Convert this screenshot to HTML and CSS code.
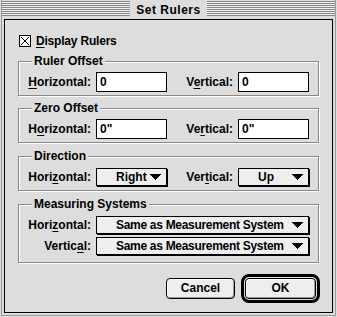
FILE: index.html
```html
<!DOCTYPE html>
<html>
<head>
<meta charset="utf-8">
<link rel="stylesheet" href="styles.css">
</head>
<body>
<div class="window">
  <div class="frame">
    <div class="titlebar"><span class="title">Set Rulers</span></div>
    <div class="panel">
      <div class="check-row">
        <span class="checkbox"><svg width="12" height="12" viewBox="0 0 12 12" shape-rendering="crispEdges"><rect x="0.5" y="0.5" width="11" height="11" fill="#fff" stroke="#000"/><path d="M2 2 L10 10 M10 2 L2 10" stroke="#000" stroke-width="1"/></svg></span>
        <span class="check-label"><u>D</u>isplay Rulers</span>
      </div>

      <div class="group g1">
        <div class="legend">Ruler Offset</div>
        <div class="row">
          <span class="lbl"><u>H</u>orizontal:</span><div class="field">0</div>
          <span class="lbl lbl-v">V<u>e</u>rtical:</span><div class="field">0</div>
        </div>
      </div>

      <div class="group g2">
        <div class="legend">Zero Offset</div>
        <div class="row">
          <span class="lbl">H<u>o</u>rizontal:</span><div class="field">0"</div>
          <span class="lbl lbl-v">Ve<u>r</u>tical:</span><div class="field">0"</div>
        </div>
      </div>

      <div class="group g3">
        <div class="legend">Direction</div>
        <div class="row row-pop">
          <span class="lbl">Hori<u>z</u>ontal:</span>
          <div class="popup pop-small"><span>Right</span><svg class="arrow" width="11" height="6" viewBox="0 0 11 6" shape-rendering="crispEdges"><polygon points="0,0 11,0 5.5,6" fill="#000"/></svg></div>
          <span class="lbl lbl-v">Ver<u>t</u>ical:</span>
          <div class="popup pop-small"><span>Up</span><svg class="arrow" width="11" height="6" viewBox="0 0 11 6" shape-rendering="crispEdges"><polygon points="0,0 11,0 5.5,6" fill="#000"/></svg></div>
        </div>
      </div>

      <div class="group g4">
        <div class="legend">Measuring Systems</div>
        <div class="row row-pop">
          <span class="lbl">Hori<u>z</u>ontal:</span>
          <div class="popup pop-wide"><span class="pop-text">Same as Measurement System</span><svg class="arrow" width="11" height="6" viewBox="0 0 11 6" shape-rendering="crispEdges"><polygon points="0,0 11,0 5.5,6" fill="#000"/></svg></div>
        </div>
        <div class="row row-pop row-second">
          <span class="lbl">Vertic<u>a</u>l:</span>
          <div class="popup pop-wide"><span class="pop-text">Same as Measurement System</span><svg class="arrow" width="11" height="6" viewBox="0 0 11 6" shape-rendering="crispEdges"><polygon points="0,0 11,0 5.5,6" fill="#000"/></svg></div>
        </div>
      </div>

      <div class="buttons">
        <div class="btn btn-cancel">Cancel</div>
        <div class="ring"><div class="btn btn-ok">OK</div></div>
      </div>
    </div>
  </div>
</div>
</body>
</html>
```

FILE: styles.css
```css
* { box-sizing: border-box; margin: 0; padding: 0; }
html, body { width: 337px; height: 317px; overflow: hidden; }
body {
  background: #dddddd;
  font: bold 12px/14px "Liberation Sans", Arial, sans-serif;
  color: #000;
}
u {
  text-decoration: underline;
  text-decoration-thickness: 1px;
  text-underline-offset: 2px;
}
.window {
  width: 337px;
  height: 317px;
  padding: 0 1px 1px 1px;
  background: #dddddd;
}
.frame {
  height: 100%;
  border: 1px solid #999999;
  border-top: 0;
  display: flex;
  flex-direction: column;
}
.titlebar {
  height: 19px;
  flex: none;
  display: flex;
  justify-content: center;
  align-items: center;
  background:
    repeating-linear-gradient(to bottom, #888888 0 1px, #eeeeee 1px 2px) 0 1px / 100% 15px no-repeat,
    #dddddd;
}
.title {
  background: #dddddd;
  padding: 1px 6px 0 6px;
  line-height: 18px;
  letter-spacing: 0.5px;
}
.panel {
  flex: 1;
  margin: 0 2px 2px 2px;
  border: 1px solid #000;
  background: #dddddd;
  display: flex;
  flex-direction: column;
  padding: 0 13px;
}
.check-row {
  margin-top: 15px;
  margin-left: 1px;
  height: 12px;
  display: flex;
  align-items: center;
  gap: 5px;
}
.checkbox { width: 12px; height: 12px; display: block; }
.checkbox svg { display: block; }
.check-label { letter-spacing: -0.2px; }

.group {
  border: 1px solid #888888;
  box-shadow: 1px 1px 0 #ffffff, inset 1px 1px 0 #ffffff;
  display: flex;
  flex-direction: column;
}
.legend {
  align-self: flex-start;
  margin: -8px 0 0 13px;
  padding: 0 2px;
  height: 14px;
  background: #dddddd;
}
.g1 { margin-top: 14px; padding-bottom: 3px; }
.g2 { margin-top: 12px; padding-bottom: 3px; }
.g3 { margin-top: 13px; padding-bottom: 4px; }
.g4 { margin-top: 13px; padding-bottom: 7px; }

.row {
  display: flex;
  align-items: center;
  margin-top: 4px;
}
.row-pop { margin-top: 5px; }
.row-second { margin-top: 3px; }
.lbl {
  width: 72px;
  text-align: right;
  margin-right: 5px;
  white-space: nowrap;
}
.lbl-v { width: 66px; }
.field {
  width: 71px;
  height: 20px;
  border: 1px solid #000;
  background: #fff;
  padding-left: 3px;
  line-height: 18px;
}
.popup {
  height: 18px;
  border: 1px solid #000;
  background: #eeeeee;
  box-shadow: 1px 1px 0 #000;
  display: flex;
  align-items: center;
  padding-left: 19px;
  padding-right: 5px;
  white-space: nowrap;
}
.pop-small { width: 71px; }
.pop-wide { width: 213px; }
.pop-text { letter-spacing: -0.3px; }
.arrow { margin-left: auto; display: block; flex: none; }

.buttons {
  margin-top: 11px;
  margin-right: -1px;
  display: flex;
  justify-content: flex-end;
  align-items: center;
  gap: 6px;
}
.btn {
  height: 21px;
  border: 1px solid #000;
  border-radius: 4px;
  background: #eeeeee;
  box-shadow: inset 1px 1px 0 #ffffff, inset -1px -1px 0 #999999;
  text-align: center;
  line-height: 19px;
}
.btn-cancel { width: 69px; }
.btn-ok { width: 71px; }
.ring {
  border: 3px solid #000;
  border-radius: 8px;
  padding: 1px;
}
```
